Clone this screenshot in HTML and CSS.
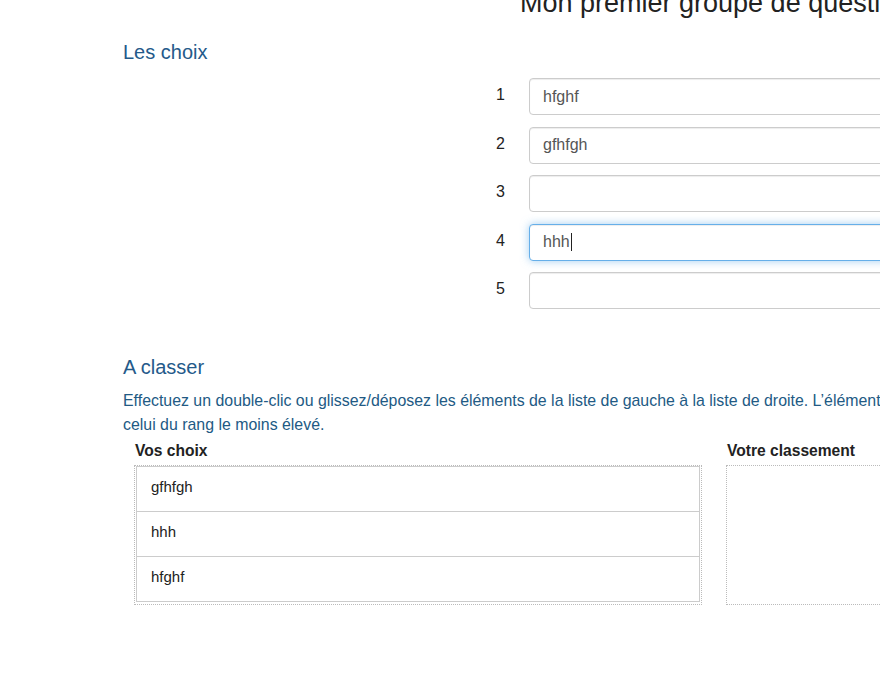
FILE: index.html
```html
<!DOCTYPE html>
<html lang="fr">
<head>
<meta charset="utf-8">
<title>Mon premier groupe de questions</title>
<link rel="stylesheet" href="styles.css">
</head>
<body>
<h1 class="page-title">Mon premier groupe de questions</h1>

<section class="question">
  <h2 class="question-heading">Les choix</h2>
  <div class="choices">
    <label class="choice-num">1</label>
    <input class="choice-input" type="text" value="hfghf">
    <label class="choice-num">2</label>
    <input class="choice-input" type="text" value="gfhfgh">
    <label class="choice-num">3</label>
    <input class="choice-input" type="text" value="">
    <label class="choice-num">4</label>
    <div class="choice-input is-focused">hhh<span class="caret"></span></div>
    <label class="choice-num">5</label>
    <input class="choice-input" type="text" value="">
  </div>
</section>

<section class="question rank">
  <h2 class="question-heading rank-heading">A classer</h2>
  <p class="help-text">Effectuez un double-clic ou glissez/déposez les éléments de la liste de gauche à la liste de droite. L’élément en haut de la liste de droite est celui du rang le plus élevé, et celui du bas est<br>celui du rang le moins élevé.</p>
  <div class="rank-lists">
    <div class="rank-col">
      <div class="rank-label">Vos choix</div>
      <ul class="rank-box">
        <li class="rank-item">gfhfgh</li>
        <li class="rank-item">hhh</li>
        <li class="rank-item">hfghf</li>
      </ul>
    </div>
    <div class="rank-col">
      <div class="rank-label">Votre classement</div>
      <ul class="rank-box rank-box-empty"></ul>
    </div>
  </div>
</section>
</body>
</html>
```
FILE: styles.css
```css
html, body {
  margin: 0;
  padding: 0;
  overflow: hidden;
  background: #fff;
}

body {
  font-family: "Liberation Sans", Arial, Helvetica, sans-serif;
  font-size: 16px;
  color: #222;
  width: 1600px;
}

.page-title {
  margin: -12px 0 0 520px;
  font-size: 27px;
  line-height: 30px;
  font-weight: normal;
  color: #222;
  white-space: nowrap;
}

.question {
  padding-left: 123px;
}

.question-heading {
  margin: 22px 0 0;
  font-size: 20px;
  line-height: 24px;
  font-weight: normal;
  color: #245a8a;
}

.choices {
  display: grid;
  grid-template-columns: 33px 520px;
  row-gap: 11.5px;
  margin: 14px 0 0 373px;
  align-items: center;
}

.choice-num {
  font-size: 16px;
  color: #222;
  margin-top: -3px;
}

.choice-input {
  box-sizing: border-box;
  height: 37px;
  width: 100%;
  margin: 0;
  padding: 0 13px;
  font-family: "Liberation Sans", Arial, Helvetica, sans-serif;
  font-size: 16px;
  color: #555;
  background: #fff;
  border: 1px solid #ccc;
  border-radius: 4px;
  box-shadow: inset 0 1px 1px rgba(0, 0, 0, 0.075);
  outline: none;
}

.choice-input.is-focused {
  display: flex;
  align-items: center;
  border-color: #66afe9;
  box-shadow: inset 0 1px 1px rgba(0, 0, 0, 0.075), 0 0 8px rgba(102, 175, 233, 0.6);
}

.caret {
  display: inline-block;
  width: 1px;
  height: 18px;
  margin-left: 1px;
  background: #222;
}

.rank-heading {
  margin-top: 45.7px;
}

.help-text {
  margin: 10px 0 0;
  font-size: 15.9px;
  line-height: 24px;
  color: #225a84;
  white-space: nowrap;
}

.rank-lists {
  display: flex;
  gap: 24px;
  margin: 4px 0 0 11px;
}

.rank-col {
  width: 568px;
}

.rank-label {
  font-size: 15.6px;
  line-height: 20px;
  font-weight: bold;
  color: #222;
  padding-left: 1px;
}

.rank-box {
  list-style: none;
  margin: 4px 0 0;
  padding: 0 1px 2px;
  height: 140px;
  box-sizing: border-box;
  border: 1px dotted #bbb;
}

.rank-item {
  box-sizing: border-box;
  height: 46px;
  line-height: 40px;
  padding: 0 14px 4px;
  font-size: 15px;
  color: #222;
  border: 1px solid #ccc;
  background: #fff;
}

.rank-item + .rank-item {
  margin-top: -1px;
}
```
